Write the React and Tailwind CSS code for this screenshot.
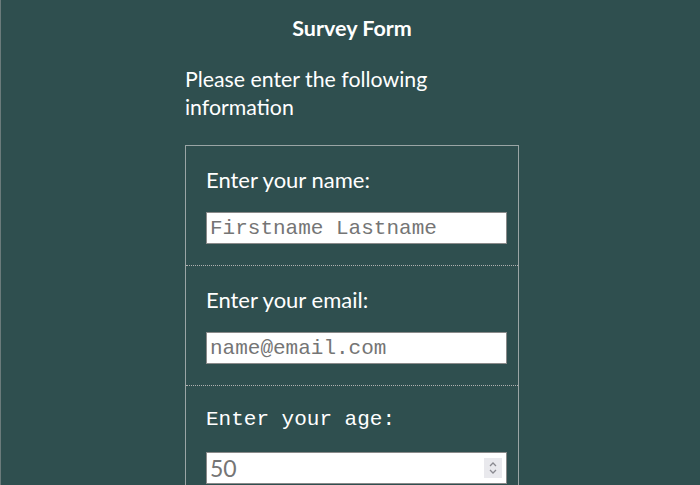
import React from 'react';

const sans = { fontFamily: 'Lato, "Open Sans", sans-serif' };

function Field({ label, mono, children, last }) {
  return (
    <div className={`px-5 pt-[22px] pb-[21px] ${last ? '' : 'border-b border-dotted border-[#b0b0b0]'}`}>
      <div
        className={`leading-6 mb-5 ${mono ? 'font-["Liberation_Mono",monospace] text-[21px]' : 'text-[22px]'}`}
      >
        {label}
      </div>
      {children}
    </div>
  );
}

export default function App() {
  return (
    <div className="min-h-[485px] h-[485px] overflow-hidden bg-[#2f4f4f] text-white border-l border-[#6b7b7b]" style={sans}>
      <div className="w-[334px] ml-[184px]">
        <h1 className="text-[21.5px] font-bold text-center pt-[15px] leading-[26px]">Survey Form</h1>
        <p className="text-[21.3px] leading-[28px] mt-[24px] pr-6">Please enter the following information</p>
        <div className="mt-[24px] border border-[#9aa5a5]">
          <Field label="Enter your name:">
            <input
              readOnly
              placeholder="Firstname Lastname"
              className="block w-[301px] h-8 bg-white border border-[#8a8a8a] pl-[3px] text-[21px] font-['Liberation_Mono',monospace] placeholder:text-[#757575] outline-none"
            />
          </Field>
          <Field label="Enter your email:">
            <input
              readOnly
              placeholder="name@email.com"
              className="block w-[301px] h-8 bg-white border border-[#8a8a8a] pl-[3px] text-[21px] font-['Liberation_Mono',monospace] placeholder:text-[#757575] outline-none"
            />
          </Field>
          <Field label="Enter your age:" mono last>
            <div className="flex items-center w-[301px] h-8 bg-white border border-[#8a8a8a] pl-[3px] pr-[4px]">
              <span className="flex-1 text-[23px] text-[#757575] leading-none">50</span>
              <span className="flex flex-col items-center justify-center w-[18px] h-[20px] bg-[#e9e9ed]">
                <svg width="10" height="14" viewBox="0 0 10 14" fill="none" stroke="#8a8a90" strokeWidth="1.3">
                  <path d="M2 5 L5 2 L8 5" />
                  <path d="M2 9 L5 12 L8 9" />
                </svg>
              </span>
            </div>
          </Field>
        </div>
      </div>
    </div>
  );
}
